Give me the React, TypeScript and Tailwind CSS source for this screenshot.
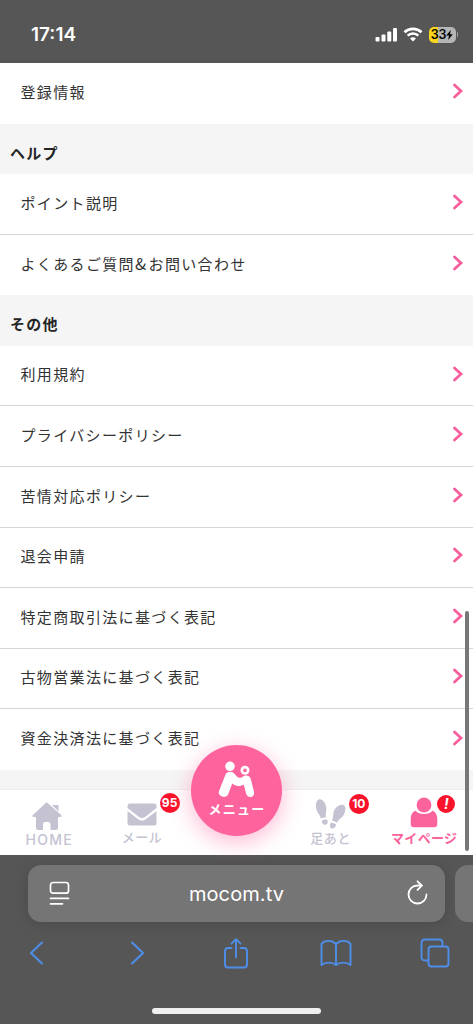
import React from 'react';

const helpItems = ['ポイント説明', 'よくあるご質問&お問い合わせ'];

const otherItems = [
  '利用規約',
  'プライバシーポリシー',
  '苦情対応ポリシー',
  '退会申請',
  '特定商取引法に基づく表記',
  '古物営業法に基づく表記',
  '資金決済法に基づく表記',
];

function StatusBar() {
  return (
    <header className="flex h-[63px] shrink-0 items-start justify-between bg-[#565656] pl-[31px] pr-[15px] pt-[23px] text-white">
      <span className="font-['Inter'] text-[19px] font-semibold leading-[24px]">17:14</span>
      <div className="flex h-[23px] items-center">
        <svg width="23" height="15" viewBox="0 0 23 15" fill="currentColor">
          <rect x="0.5" y="10" width="4" height="4.5" rx="1" />
          <rect x="6.5" y="7.5" width="4" height="7" rx="1" />
          <rect x="12.3" y="4.5" width="4" height="10" rx="1" />
          <rect x="18" y="1" width="4" height="13.5" rx="1" />
        </svg>
        <svg className="ml-[5px]" width="20" height="15" viewBox="0 0 20 15" fill="none" stroke="currentColor">
          <path d="M1.5 5.2C6.3 0.7 13.7 0.7 18.5 5.2" strokeWidth="2.7" />
          <path d="M4.6 8.7C7.7 5.8 12.3 5.8 15.4 8.7" strokeWidth="2.5" />
          <path d="M10 14.5L7 11.4C8.6 9.9 11.4 9.9 13 11.4Z" fill="currentColor" stroke="none" />
        </svg>
        <div className="ml-[6px] flex h-[16px] w-[27px] items-center justify-center rounded-[5px] bg-[linear-gradient(90deg,#fbd51c_9px,#b5b5b5_9px)] text-black">
          <span className="pt-px font-['Inter'] text-[12.5px] font-semibold leading-[16px] tracking-[-0.3px]">33</span>
          <svg width="7" height="10" viewBox="0 0 7 10" fill="currentColor">
            <path d="M4.8 0L0.2 5.6H3L2.2 10L6.8 4.2H4Z" />
          </svg>
        </div>
        <span className="ml-px h-[5px] w-[1.5px] rounded-r bg-[#a0a0a0]" />
      </div>
    </header>
  );
}

function SectionTitle({ title }: { title: string }) {
  return (
    <h2 className="flex h-[50.6px] shrink-0 items-center bg-[#f5f5f5] pl-[10px] pt-[8px] text-[15px] font-bold tracking-[1.2px] text-[#252525]">
      {title}
    </h2>
  );
}

function Row({ label, last }: { label: string; last?: boolean }) {
  return (
    <li
      className={`flex h-[60.57px] shrink-0 items-center justify-between border-[#d6d6d6] bg-white pl-[20.5px] pr-[9px] ${
        last ? '' : 'border-b'
      }`}
    >
      <span className="pb-[2px] text-[15px] tracking-[1.35px] text-[#333333]">
        {label.split('&').map((part, i) => (
          <React.Fragment key={part}>
            {i > 0 && <span className="mr-[1px] text-[16.5px] leading-none">&amp;</span>}
            {part}
          </React.Fragment>
        ))}
      </span>
      <svg className="mb-[4px]" width="12" height="16" viewBox="0 0 12 16" fill="none" stroke="#f75f9c" strokeWidth="2.8">
        <path d="M2.5 2L9 8L2.5 14" strokeLinecap="round" />
      </svg>
    </li>
  );
}

function Badge({ children, className }: { children: React.ReactNode; className: string }) {
  return (
    <span
      className={`absolute flex items-center justify-center rounded-full bg-[#f9132b] font-['Inter'] text-[12px] font-bold leading-none text-white ${className}`}
    >
      {children}
    </span>
  );
}

function TabBar() {
  return (
    <nav className="relative grid h-[66px] shrink-0 grid-cols-5 border-t border-[#eeeeee] bg-white text-[13px] font-medium text-[#c5c3d2]">
      <a className="flex flex-col items-center pt-[12px]">
        <svg width="31" height="29" viewBox="0 0 31 29" fill="currentColor">
          <path d="M15.4 0.8C15 0.4 14.4 0.4 14 0.8L0.8 13C0 13.8 0.4 15 1.5 15H4V26Q4 28 6 28H11V22C11 19 18.5 19 18.5 22V28H24Q26 28 26 26V15H28.5C29.8 15 30 13.8 29.2 13Z" />
          <path d="M20 3H26.5V9.5Z" />
        </svg>
        <span className="pl-[4px] font-['Inter'] text-[14px] leading-[18px] tracking-[1.3px]">HOME</span>
      </a>

      <a className="relative flex flex-col items-center pt-[13px]">
        <svg width="30" height="23" viewBox="0 0 30 23" fill="currentColor">
          <path d="M3 0.5H27Q29.5 0.5 29.5 3V5L18 14Q15 16.3 12 14L0.5 5V3Q0.5 0.5 3 0.5Z" />
          <path d="M0.5 8L11.2 16.3Q15 19 18.8 16.3L29.5 8V20Q29.5 22.5 27 22.5H3Q0.5 22.5 0.5 20Z" />
        </svg>
        <span className="mt-px leading-[20px] tracking-[0.5px]">メール</span>
        <Badge className="left-[65px] top-[3px] size-[20px]">95</Badge>
      </a>

      <a className="relative flex justify-center">
        <span className="absolute -top-[45px] flex size-[91px] flex-col items-center rounded-full bg-[#fd639d] pt-[16px] text-white shadow-[0_6px_22px_rgba(253,99,157,0.45)]">
          <svg width="38" height="38" viewBox="0 0 38 38" fill="none" stroke="currentColor" strokeLinecap="round" strokeLinejoin="round">
            <circle cx="13" cy="5.3" r="4.8" fill="currentColor" stroke="none" />
            <circle cx="28" cy="9.3" r="3.2" strokeWidth="2.6" />
            <path
              d="M8.3 14C9.6 10.4 14.4 9.6 17.2 12.4C19.8 15 21.5 18.5 25.4 15.9C29.5 13.2 33 14.8 33.8 18.2L37 30.6C38.2 36.6 31 38 29.2 33.1L26.7 23.4C22.6 26 18.2 25.2 15.2 22.5L11.1 33.4C9 38 0.4 35.6 1.9 30.4Z"
              fill="currentColor"
              stroke="none"
            />
          </svg>
          <span className="pl-[1px] text-[13px] font-bold leading-[20px] tracking-[1.2px]">メニュー</span>
        </span>
      </a>

      <a className="relative flex flex-col items-center pt-[9px]">
        <svg width="32" height="31" viewBox="0 0 32 31" fill="currentColor">
          <path d="M3.5 0.6C7 -0.8 10.8 4 11.3 8.5C11.6 12 10.6 14.2 10.9 18.2L5.8 19.3C5.3 16 2.3 14 1.3 10C0.5 6.5 1 2 3.5 0.6Z" />
          <path d="M6.8 21.5L11.4 20.3C13.3 21.3 13.2 25.1 10.8 25.7C8.3 26.3 6.7 24 6.8 21.5Z" />
          <path d="M28.4 6C31.2 7.2 30.8 12 29 15.4C27 19 23.8 20 22.2 23.5L17.1 21.6C18.6 18 17.7 15.4 18.9 12C20.4 8 25.2 4.5 28.4 6Z" />
          <path d="M16.3 23.5L20.8 25.1C21.2 27.6 19.3 29.9 17 29.5C14.5 29 14.2 25.5 16.3 23.5Z" />
        </svg>
        <span className="-mt-[2px] pr-[1px] leading-[20px] tracking-[0.6px]">足あと</span>
        <Badge className="left-[65px] top-[4px] size-[20px]">10</Badge>
      </a>

      <a className="relative flex flex-col items-center pr-[3px] pt-[7px] font-bold text-[#fb639d]">
        <svg width="28" height="31" viewBox="0 0 28 31" fill="currentColor">
          <circle cx="14" cy="8" r="7.4" />
          <path d="M5.5 13.7C9.5 18.1 18.5 18.1 22.5 13.7C26 14.9 27.3 18.4 27.3 22.5V27Q27.3 30.3 24 30.3H4Q0.7 30.3 0.7 27V22.5C0.7 18.4 2 14.9 5.5 13.7Z" />
        </svg>
        <span className="whitespace-nowrap leading-[20px] tracking-[0.3px]">マイページ</span>
        <Badge className="left-[59px] top-[5px] size-[18px]">
          <span className="text-[14px] italic">!</span>
        </Badge>
      </a>

      <span className="absolute bottom-[4px] right-[4px] h-[240px] w-[4px] rounded-full bg-[#777777]" />
    </nav>
  );
}

function BrowserBar() {
  return (
    <footer className="flex h-[169px] shrink-0 flex-col overflow-hidden bg-[#565656]">
      <div className="flex gap-[10px] pl-[28px] pt-[10px]">
        <div className="flex h-[57px] w-[417px] shrink-0 items-center justify-between rounded-[13px] bg-[#757575] pl-[21px] pr-[16px] text-white shadow-[0_2px_12px_rgba(0,0,0,0.14)]">
          <svg width="21" height="25" viewBox="0 0 21 25" fill="none" stroke="currentColor" strokeWidth="1.7" strokeLinecap="round">
            <rect x="1.5" y="1.5" width="18" height="10.7" rx="2.5" />
            <path d="M1.5 17.3H19.5M1.5 22.8H13.5" />
          </svg>
          <span className="pr-[3px] font-['Inter'] text-[20px] tracking-[0.1px]">mocom.tv</span>
          <svg width="23" height="27" viewBox="0 0 23 27" fill="none" stroke="currentColor" strokeWidth="1.8" strokeLinecap="round" strokeLinejoin="round">
            <path d="M20.5 14.5A9 9 0 1 1 11.5 5.5H15.5" />
            <path d="M11.5 1.3L15.9 5.6L11.5 9.9" />
          </svg>
        </div>
        <div className="h-[57px] w-[40px] shrink-0 rounded-[13px] bg-[#757575]" />
      </div>

      <div className="mt-[13px] flex h-[36px] items-center justify-between pl-[28px] pr-[23px] text-[#4e8ee8]">
        <svg width="17" height="26" viewBox="0 0 17 26" fill="none" stroke="currentColor" strokeWidth="2.1" strokeLinecap="round" strokeLinejoin="round">
          <path d="M14 2.5L3 13L14 23.5" />
        </svg>
        <svg className="ml-[15px]" width="17" height="26" viewBox="0 0 17 26" fill="none" stroke="currentColor" strokeWidth="2.1" strokeLinecap="round" strokeLinejoin="round">
          <path d="M3 2.5L14 13L3 23.5" />
        </svg>
        <svg className="ml-[9px] mr-[2px]" width="26" height="33" viewBox="0 0 26 33" fill="none" stroke="currentColor" strokeWidth="1.9" strokeLinecap="round" strokeLinejoin="round">
          <path d="M8.5 11H5Q2 11 2 14V27.5Q2 30.5 5 30.5H21Q24 30.5 24 27.5V14Q24 11 21 11H17.5" />
          <path d="M13 20.5V2.5M8.5 6.7L13 2.2L17.5 6.7" />
        </svg>
        <svg width="32" height="28" viewBox="0 0 32 28" fill="none" stroke="currentColor" strokeWidth="1.9" strokeLinecap="round" strokeLinejoin="round">
          <path d="M16 5C12 0.8 4.5 1 1.5 4.8V26C5.5 22.8 12 22.8 16 26C20 22.8 26.5 22.8 30.5 26V4.8C27.5 1 20 0.8 16 5Z" />
          <path d="M16 5V26" />
        </svg>
        <svg width="30" height="30" viewBox="0 0 30 30" fill="none" stroke="currentColor" strokeWidth="1.9" strokeLinejoin="round">
          <path d="M8 22.5H5Q1.5 22.5 1.5 19V5Q1.5 1.5 5 1.5H19Q22.5 1.5 22.5 5V8" />
          <rect x="8.5" y="8.5" width="20" height="20" rx="3" />
        </svg>
      </div>

      <div className="mx-auto mt-[36.5px] h-[6px] w-[169px] rounded-full bg-[#f0f0f0]" />
    </footer>
  );
}

export default function App() {
  return (
    <div className="flex h-[1024px] w-[473px] flex-col overflow-hidden bg-white font-['Noto_Sans_CJK_JP',sans-serif]">
      <StatusBar />

      <main className="flex h-[726px] shrink-0 flex-col bg-[#f5f5f5]">
        <ul>
          <Row label="登録情報" last />
        </ul>

        <SectionTitle title="ヘルプ" />
        <ul>
          {helpItems.map((item, i) => (
            <Row key={item} label={item} last={i === helpItems.length - 1} />
          ))}
        </ul>

        <SectionTitle title="その他" />
        <ul>
          {otherItems.map((item, i) => (
            <Row key={item} label={item} last={i === otherItems.length - 1} />
          ))}
        </ul>
      </main>

      <TabBar />
      <BrowserBar />
    </div>
  );
}
